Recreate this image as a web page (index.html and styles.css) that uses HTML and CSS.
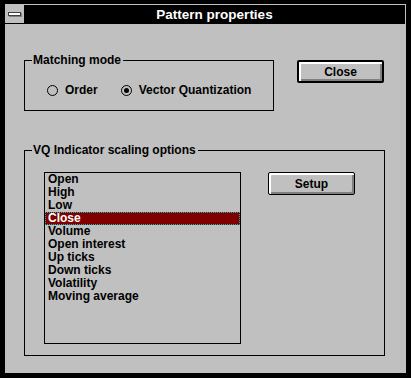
FILE: index.html
```html
<!DOCTYPE html>
<html lang="en">
<head>
    <meta charset="UTF-8">
    <title>Pattern properties</title>
    <link rel="stylesheet" href="styles.css">
</head>
<body>
    <div class="window">
        <div class="titlebar">
            <div class="sysmenu"><span class="sysbar"></span></div>
            <div class="title">Pattern properties</div>
        </div>

        <div class="client">
            <div class="top-row">
                <fieldset class="group mode">
                    <legend>Matching mode</legend>
                    <div class="radios">
                        <label class="radio">
                            <svg viewBox="0 0 11 11"><circle cx="5.5" cy="5.5" r="5" fill="none" stroke="#000"/></svg>
                            Order
                        </label>
                        <label class="radio vq-radio">
                            <svg viewBox="0 0 11 11"><circle cx="5.5" cy="5.5" r="5" fill="none" stroke="#000"/><circle cx="5.5" cy="5.5" r="2.5" fill="#000"/></svg>
                            Vector Quantization
                        </label>
                    </div>
                </fieldset>
                <button class="btn default">Close</button>
            </div>

            <fieldset class="group vq">
                <legend>VQ Indicator scaling options</legend>
                <div class="vq-body">
                    <ul class="listbox">
                        <li>Open</li>
                        <li>High</li>
                        <li>Low</li>
                        <li class="sel">Close</li>
                        <li>Volume</li>
                        <li>Open interest</li>
                        <li>Up ticks</li>
                        <li>Down ticks</li>
                        <li>Volatility</li>
                        <li>Moving average</li>
                    </ul>
                    <button class="btn">Setup</button>
                </div>
            </fieldset>
        </div>
    </div>
</body>
</html>
```

FILE: styles.css
```css
* {
    box-sizing: border-box;
}
html, body {
    margin: 0;
    background: #000;
}
body {
    width: 411px;
    height: 378px;
    padding: 4px 5px 5px;
    font-family: "Liberation Sans", Arial, sans-serif;
    font-size: 12px;
    font-weight: bold;
    color: #000;
}
.window {
    width: 401px;
    height: 369px;
    background: #c0c0c0;
    padding-top: 1px;
}
.titlebar {
    display: flex;
    height: 19px;
    margin-right: 1px;
}
.sysmenu {
    width: 19px;
    border-bottom: 1px solid #000;
    display: flex;
    align-items: center;
    justify-content: center;
}
.sysbar {
    width: 13px;
    height: 4px;
    background: #fff;
    border: 1px solid #404040;
    box-shadow: 1px 1px 0 #808080;
}
.title {
    flex: 1;
    background: #000;
    color: #fff;
    text-align: center;
    line-height: 19px;
    font-size: 13.5px;
}
.client {
    padding: 30px 0 0 19px;
}
.top-row {
    display: flex;
    align-items: flex-start;
}
fieldset.group {
    margin: 0;
    padding: 0;
    min-width: 0;
    border: 1px solid #000;
}
.group legend {
    margin-left: 7px;
    padding: 0 2px 0 1px;
    line-height: 13px;
}
.mode {
    width: 250px;
    height: 57px;
}
.radios {
    display: flex;
    padding: 17px 0 0 22px;
    line-height: 13px;
}
.radio {
    display: flex;
    align-items: center;
}
.radio svg {
    width: 11px;
    height: 11px;
    margin-right: 7px;
}
.vq-radio {
    margin-left: 23px;
}
.btn {
    width: 87px;
    height: 23px;
    padding: 0;
    border: 1px solid #000;
    border-radius: 2px;
    background: #c0c0c0;
    box-shadow: inset 2px 2px 0 #fff, inset -2px -2px 0 #808080;
    font: inherit;
    color: #000;
}
.btn.default {
    border-width: 2px;
    margin: 6px 0 0 23px;
}
.vq {
    margin-top: 33px !important;
    width: 361px;
    height: 212px;
}
.vq-body {
    display: flex;
    align-items: flex-start;
    padding: 15px 0 0 19px;
}
.listbox {
    width: 197px;
    height: 172px;
    margin: 0;
    padding: 0;
    list-style: none;
    border: 1px solid #000;
}
.listbox li {
    line-height: 13px;
    padding-left: 3px;
}
.listbox .sel {
    background: #800000;
    color: #fff;
    outline: 1px dotted #00c0c0;
    outline-offset: -1px;
}
.vq-body .btn {
    margin-left: 27px;
}
```
